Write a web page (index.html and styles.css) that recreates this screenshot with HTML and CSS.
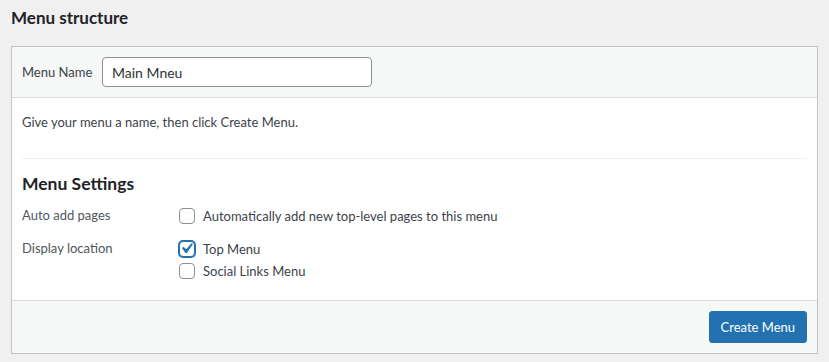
FILE: index.html
```html
<!doctype html>
<html lang="en">
    <head>
        <meta charset="UTF-8" />
        <meta name="viewport" content="width=device-width, initial-scale=1.0" />
        <title>Menu structure</title>
        <link rel="stylesheet" href="styles.css">
    </head>
    <body>
        <h2 class="page-title">Menu structure</h2>

        <div class="menu-box">
            <div class="menu-header">
                <label class="name-label" for="menuName">Menu Name</label>
                <input class="name-input" id="menuName" type="text" value="Main Mneu" />
            </div>

            <div class="menu-body">
                <p class="hint">Give your menu a name, then click Create Menu.</p>

                <div class="menu-settings">
                    <h3>Menu Settings</h3>

                    <div class="setting-row">
                        <div class="setting-label">Auto add pages</div>
                        <div class="setting-options">
                            <label class="option">
                                <span class="check"></span>
                                Automatically add new top-level pages to this menu
                            </label>
                        </div>
                    </div>

                    <div class="setting-row">
                        <div class="setting-label">Display location</div>
                        <div class="setting-options">
                            <label class="option">
                                <span class="check checked">
                                    <svg viewBox="0 0 20 20" width="21" height="21">
                                        <path d="M14.83 4.89l1.34.94-5.81 8.38H9.02L5.78 9.67l1.34-1.25 2.57 2.4z" fill="#2271b1"/>
                                    </svg>
                                </span>
                                Top Menu
                            </label>
                            <label class="option">
                                <span class="check"></span>
                                Social Links Menu
                            </label>
                        </div>
                    </div>
                </div>
            </div>

            <div class="menu-footer">
                <a href="#" class="button">Create Menu</a>
            </div>
        </div>
    </body>
</html>
```

FILE: styles.css
```css
body {
    margin: 0;
    padding: 0 11px;
    background-color: #f0f0f1;
    font-family: Lato, "Noto Sans", sans-serif;
    font-size: 13px;
    color: #3c434a;
}
.page-title {
    margin: 0 0 10px;
    font-size: 17px;
    line-height: 36px;
    font-weight: 700;
    color: #1d2327;
}
.menu-box {
    background-color: #fff;
    border: 1px solid #c3c4c7;
}
.menu-header {
    display: flex;
    align-items: center;
    padding: 10px;
    background-color: #f6f7f7;
    border-bottom: 1px solid #dcdcde;
}
.name-label {
    width: 80px;
    color: #3c434a;
}
.name-input {
    box-sizing: border-box;
    width: 270px;
    height: 30px;
    margin: 0;
    padding: 0 9px;
    border: 1px solid #8c8f94;
    border-radius: 4px;
    font-family: inherit;
    font-size: 14px;
    color: #2c3338;
    background-color: #fff;
}
.menu-body {
    padding: 0 10px 18px;
}
.hint {
    margin: 14px 0 26px;
    line-height: 20px;
}
.menu-settings {
    border-top: 1px solid #f0f0f1;
}
.menu-settings h3 {
    margin: 13px 0 9px;
    font-size: 17.5px;
    line-height: 24px;
    color: #1d2327;
}
.setting-row {
    display: flex;
    margin-bottom: 11px;
}
.setting-row:last-child {
    margin-bottom: 0;
}
.setting-label {
    width: 157px;
    line-height: 20px;
    color: #50575e;
}
.option {
    display: flex;
    align-items: center;
    gap: 8px;
    height: 22px;
    color: #3c434a;
}
.check {
    position: relative;
    box-sizing: border-box;
    width: 16px;
    height: 16px;
    border: 1px solid #8c8f94;
    border-radius: 4px;
    background-color: #fff;
}
.check.checked {
    border-color: #2271b1;
    box-shadow: 0 0 0 1px #2271b1;
}
.check svg {
    position: absolute;
    top: -4px;
    left: -4px;
}
.menu-footer {
    display: flex;
    justify-content: flex-end;
    padding: 10px;
    background-color: #f6f7f7;
    border-top: 1px solid #dcdcde;
}
.button {
    display: inline-block;
    height: 32px;
    line-height: 30px;
    padding: 0 11px;
    box-sizing: border-box;
    border: 1px solid #2271b1;
    border-radius: 3px;
    background-color: #2271b1;
    color: #fff;
    text-decoration: none;
}
```
